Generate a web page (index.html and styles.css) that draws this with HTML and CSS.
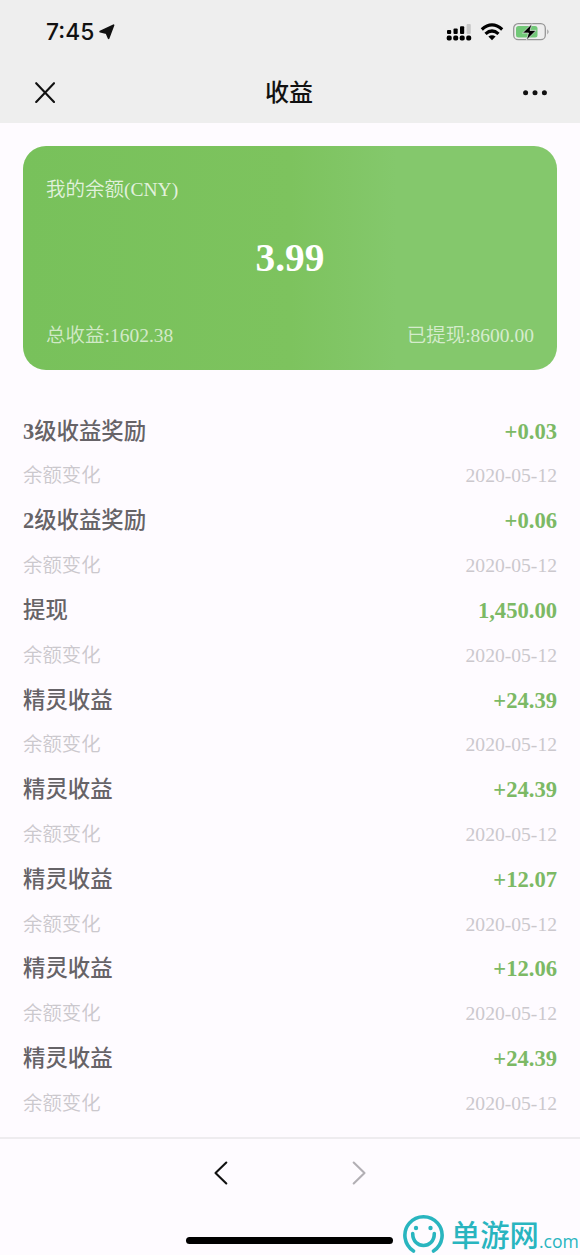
FILE: index.html
```html
<!DOCTYPE html>
<html lang="zh-CN">
<head>
<meta charset="utf-8">
<title>收益</title>
<link rel="stylesheet" href="styles.css">
</head>
<body>
<div class="screen">
  <header class="top">
    <div class="status">
      <div class="clock"><span>7:45</span>
        <svg class="locate" width="16" height="16" viewBox="0 0 16 16"><path d="M14.500 1.200 9.600 14.200 7.400 9 1.200 7.600z" fill="#111" stroke="#111" stroke-width="1.800" stroke-linejoin="round"/></svg>
      </div>
      <svg class="indicators" width="106" height="20" viewBox="0 0 106 20">
        <g fill="#000">
          <rect x="1" y="8" width="4.200" height="4" rx="1"/><rect x="7.500" y="6.500" width="4.200" height="5.500" rx="1"/><rect x="14" y="4.200" width="4.200" height="7.800" rx="1"/>
          <rect x="20.600" y="2" width="4.200" height="10" rx="1" fill="#c8c8c8"/>
          <rect x="0.700" y="13.600" width="5" height="5" rx="1.800"/><rect x="7.200" y="13.600" width="5" height="5" rx="1.800"/><rect x="13.700" y="13.600" width="5" height="5" rx="1.800"/><rect x="20.200" y="13.600" width="5" height="5" rx="1.800"/>
        </g>
        <g fill="none" stroke="#000" stroke-width="3.200"><path d="M35.800 7.500q10.200-9.200 20.400 0"/><path d="M39.500 11.900q6.500-5.800 13 0"/></g>
        <path d="M42.400 14.600q3.600-2.800 7.200 0L46 18.200z"/>
        <rect x="67.700" y="1.700" width="31.600" height="16" rx="4.500" fill="none" stroke="#969696" stroke-width="1.300"/>
        <rect x="70" y="4" width="21.500" height="11.400" rx="2.500" fill="#72c878"/>
        <path d="M101.300 7.200q2.600 2.500 0 5.200z" fill="#999"/>
        <path d="M86 1.700 76.500 11h6l-2.200 7.200 9.900-9.800h-6.200z" stroke="#eee" stroke-width=".7"/>
      </svg>
    </div>
    <nav class="titlebar">
      <svg width="20" height="22" viewBox="0 0 20 22"><path d="M1.200 1.200 19 20M19 1.200 1.200 20" fill="none" stroke="#111" stroke-width="2.100" stroke-linecap="round"/></svg>
      <h1>收益</h1>
      <svg width="26" height="22" viewBox="0 0 26 22"><g fill="#111"><circle cx="2.600" cy="10.700" r="2.500"/><circle cx="12" cy="10.700" r="2.500"/><circle cx="21.400" cy="10.700" r="2.500"/></g></svg>
    </nav>
  </header>

  <main class="content">
    <section class="card">
      <div class="card-label">我的余额(CNY)</div>
      <div class="balance">3.99</div>
      <div class="totals"><span>总收益:1602.38</span><span>已提现:8600.00</span></div>
    </section>
    <ul class="records">
      <li><span class="name"><b>3</b>级收益奖励</span><span class="amount">+0.03</span><span class="note">余额变化</span><time>2020-05-12</time></li>
      <li><span class="name"><b>2</b>级收益奖励</span><span class="amount">+0.06</span><span class="note">余额变化</span><time>2020-05-12</time></li>
      <li><span class="name">提现</span><span class="amount">1,450.00</span><span class="note">余额变化</span><time>2020-05-12</time></li>
      <li><span class="name">精灵收益</span><span class="amount">+24.39</span><span class="note">余额变化</span><time>2020-05-12</time></li>
      <li><span class="name">精灵收益</span><span class="amount">+24.39</span><span class="note">余额变化</span><time>2020-05-12</time></li>
      <li><span class="name">精灵收益</span><span class="amount">+12.07</span><span class="note">余额变化</span><time>2020-05-12</time></li>
      <li><span class="name">精灵收益</span><span class="amount">+12.06</span><span class="note">余额变化</span><time>2020-05-12</time></li>
      <li><span class="name">精灵收益</span><span class="amount">+24.39</span><span class="note">余额变化</span><time>2020-05-12</time></li>
    </ul>
  </main>

  <footer class="bottom">
    <div class="history">
      <svg width="16" height="26" viewBox="0 0 16 26"><path d="M13.300 2.500 2.500 13 13.300 23.500" fill="none" stroke="#111" stroke-width="2.100" stroke-linecap="round" stroke-linejoin="round"/></svg>
      <svg width="16" height="26" viewBox="0 0 16 26"><path d="M2.700 2.500 13.500 13 2.700 23.500" fill="none" stroke="#b2afb4" stroke-width="2.100" stroke-linecap="round" stroke-linejoin="round"/></svg>
    </div>
    <div class="home"></div>
    <div class="brand">
      <svg width="42" height="40" viewBox="0 0 42 40">
        <g fill="none" stroke="#29b5bf" stroke-linecap="round">
          <path d="M11.500 37A18.600 18.600 0 1 1 31.500 37" stroke-width="3.600"/>
          <path d="M10.700 19.500C10.700 35.500 32.300 35.500 32.300 19.500" stroke-width="3.600"/>
        </g>
        <circle cx="14" cy="14" r="2.200" fill="#29b5bf"/><circle cx="28.500" cy="14" r="2.200" fill="#29b5bf"/>
      </svg>
      <span class="brand-name">单游网</span><span class="brand-domain">.com</span>
    </div>
  </footer>
</div>
</body>
</html>
```
FILE: styles.css
```css
* { box-sizing: border-box; }
body { margin: 0; background: #fefbff; }
.screen {
  width: 580px;
  height: 1255px;
  display: flex;
  flex-direction: column;
  overflow: hidden;
  position: relative;
  font-family: "Liberation Serif", "Noto Sans CJK SC", serif;
}
.top { height: 123px; background: #eee; flex: none; }
.status {
  height: 62px;
  padding: 1px 28px 0 46px;
  display: flex;
  justify-content: space-between;
  align-items: center;
}
.clock {
  display: flex;
  align-items: center;
  gap: 5px;
  font: 500 22.8px/30px Inter, sans-serif;
  color: #111;
}
.titlebar {
  height: 61px;
  padding: 0 31px 0 35px;
  display: flex;
  justify-content: space-between;
  align-items: center;
}
.titlebar h1 {
  margin: 0 0 3px;
  font: 500 24px/36px "Noto Sans CJK SC", sans-serif;
  color: #111;
}
.content { flex: none; height: 1014px; padding: 23px 23px 0; }
.card {
  height: 224px;
  padding: 22px 23px 12px;
  border-radius: 23px;
  background: linear-gradient(90deg, #78c15b, #7dc35e 50%, #84c86c 70%, #84c86c);
  color: #fff;
  display: flex;
  flex-direction: column;
}
.card-label, .totals {
  font-size: 19.5px;
  line-height: 44px;
  font-weight: 350;
  color: rgba(255, 255, 255, .8);
}
.card-label { height: 44px; }
.balance {
  margin-top: 23px;
  font-size: 39.3px;
  line-height: 46px;
  font-weight: 700;
  text-align: center;
}
.totals {
  display: flex;
  justify-content: space-between;
  margin-top: auto;
  color: rgba(255, 255, 255, .68);
}
.records { list-style: none; margin: 39.6px 0 0; padding: 0; }
.records li {
  height: 89.65px;
  display: grid;
  grid-template-columns: 1fr auto;
  grid-template-rows: 44.8px 44.8px;
  line-height: 44.8px;
}
.name { font-size: 22.4px; font-weight: 500; color: #666367; }
.name b { font-weight: 700; }
.amount { font-size: 22.6px; font-weight: 700; color: #7cb965; text-align: right; }
.note, .records time { font-size: 19.6px; font-weight: 350; color: #cbc8cd; }
.note { font-size: 19.4px; }
.records time { text-align: right; }
.bottom { flex: 1; border-top: 2px solid #eeecef; }
.history {
  height: 68px;
  display: flex;
  justify-content: center;
  align-items: center;
  gap: 122px;
}
.home { width: 207px; height: 7px; margin: 30px 0 0 186px; border-radius: 4px; background: #000; }
.brand {
  position: absolute;
  left: 402px;
  top: 1214px;
  height: 40px;
  display: flex;
  color: #29b5bf;
  white-space: nowrap;
}
.brand-name { font: 500 29.300px/40px "Noto Sans CJK SC", sans-serif; margin: -1px 0 0 7px; }
.brand-domain { font: 400 17.6px/40px "Open Sans", sans-serif; padding-top: 7px; }
```
